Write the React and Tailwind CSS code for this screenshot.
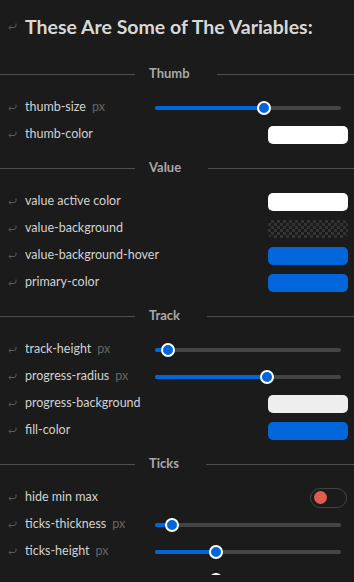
import React from "react";

const sections = [
	{
		title: "Thumb",
		rows: [
			{ label: "thumb-size", unit: "px", type: "slider", value: 0.586 },
			{ label: "thumb-color", type: "color", color: "bg-white" },
		],
	},
	{
		title: "Value",
		rows: [
			{ label: "value active color", type: "color", color: "bg-white" },
			{ label: "value-background", type: "checker" },
			{ label: "value-background-hover", type: "color", color: "bg-[#0066d9]" },
			{ label: "primary-color", type: "color", color: "bg-[#0066d9]" },
		],
	},
	{
		title: "Track",
		rows: [
			{ label: "track-height", unit: "px", type: "slider", value: 0.07 },
			{ label: "progress-radius", unit: "px", type: "slider", value: 0.6 },
			{ label: "progress-background", type: "color", color: "bg-[#eeeeee]" },
			{ label: "fill-color", type: "color", color: "bg-[#0066d9]" },
		],
	},
	{
		title: "Ticks",
		rows: [
			{ label: "hide min max", type: "toggle" },
			{ label: "ticks-thickness", unit: "px", type: "slider", value: 0.093 },
			{ label: "ticks-height", unit: "px", type: "slider", value: 0.33 },
			// next row is scrolled past the panel's edge, only its thumb peeks in
			{ label: "", type: "slider", value: 0.33, hidden: true },
		],
	},
];

const HookArrow = () => (
	<svg width="9" height="7" viewBox="0 0 9 7" fill="none" className="shrink-0">
		<path
			d="M8 0.5 V2.5 A2 2 0 0 1 6 4.5 H1 M2.8 2.6 L0.9 4.5 L2.8 6.4"
			stroke="#5a5a5a"
			strokeWidth="1"
		/>
	</svg>
);

const Slider = ({ value }) => (
	<div className="relative ml-auto mr-[7px] h-[4px] w-[186px] rounded-full bg-[#444444]">
		<div
			className="absolute left-0 top-0 h-full rounded-full bg-[#0066d9]"
			style={{ width: `${value * 100}%` }}
		/>
		<div
			className="absolute top-1/2 h-[14px] w-[14px] -translate-x-1/2 -translate-y-1/2 rounded-full border-2 border-white bg-[#0066d9]"
			style={{ left: `${value * 100}%` }}
		/>
	</div>
);

const Checker = () => (
	<div className="ml-auto h-[18px] w-[80px] rounded-[5px] bg-[#1a1a1a] bg-[length:6px_6px] bg-[image:conic-gradient(#333333_25%,transparent_0_50%,#333333_0_75%,transparent_0)]" />
);

const Toggle = () => (
	<div className="ml-auto mr-[1px] flex h-[20px] w-[37px] items-center rounded-full border border-[#444444] px-[3px]">
		<div className="h-[13px] w-[13px] rounded-full bg-[#df5d4d]" />
	</div>
);

const Row = ({ row }) => (
	<div className={`flex h-[27px] items-center pl-[8px] pr-[6px] ${row.hidden ? "mt-[1px]" : ""}`}>
		{!row.hidden && <HookArrow />}
		{row.label && (
			<span className="ml-[8px] text-[12.5px] text-[#d2d2d2]">{row.label}</span>
		)}
		{row.unit && <span className="ml-[6px] text-[12.5px] text-[#666666]">{row.unit}</span>}
		{row.type === "slider" && <Slider value={row.value} />}
		{row.type === "color" && (
			<div className={`ml-auto h-[18px] w-[80px] rounded-[5px] ${row.color}`} />
		)}
		{row.type === "checker" && <Checker />}
		{row.type === "toggle" && <Toggle />}
	</div>
);

const Divider = ({ title }) => (
	<div className="flex h-[40px] items-center">
		<div className="h-px w-[135px] bg-[#4d4d4d]" />
		<span className="ml-[14px] text-[13px] font-bold text-[#a8a8a8]">{title}</span>
		<div className="ml-[27px] h-px flex-1 bg-[#4d4d4d]" />
	</div>
);

export default function App() {
	return (
		<div
			className="h-[582px] w-[354px] overflow-hidden bg-[#1b1b1b]"
			style={{ fontFamily: 'Lato, "Open Sans", sans-serif' }}>
			<div className="h-[575px] overflow-hidden">
				<div className="flex h-[54px] items-center pl-[8px] pb-[1px]">
					<HookArrow />
					<h1 className="ml-[8px] text-[19.5px] font-bold text-[#d8d8d8]">
						These Are Some of The Variables:
					</h1>
				</div>
				{sections.map((s) => (
					<div key={s.title}>
						<Divider title={s.title} />
						{s.rows.map((r, i) => (
							<Row key={i} row={r} />
						))}
					</div>
				))}
			</div>
		</div>
	);
}
